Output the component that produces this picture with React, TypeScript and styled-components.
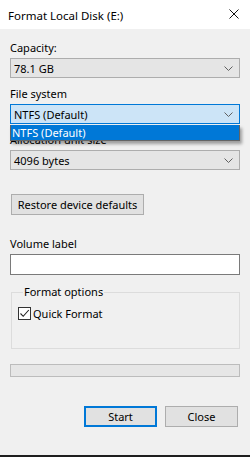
import styled, { createGlobalStyle } from 'styled-components';

const GlobalStyle = createGlobalStyle`
  html, body {
    margin: 0;
    padding: 0;
    background: #f0f0f0;
  }
  body {
    font-family: "Noto Sans", "Liberation Sans", Arial, sans-serif;
    font-size: 11px;
    color: #000;
  }
`;

export default function App() {
    return (
        <Window>
            <GlobalStyle/>
            <TitleBar>
                <Title>Format Local Disk (E:)</Title>
                <CloseIcon width="10" height="10" viewBox="0 0 10 10">
                    <path d="M0.5 0.5 L9.5 9.5 M9.5 0.5 L0.5 9.5" stroke="#111" strokeWidth="1"/>
                </CloseIcon>
            </TitleBar>

            <Content>
                <Field>
                    <Label>Capacity:</Label>
                    <Combo>
                        <span>78.1 GB</span>
                        <Chevron/>
                    </Combo>
                </Field>

                <Field>
                    <Label>File system</Label>
                    <ComboWrap>
                        <Combo open>
                            <span>NTFS (Default)</span>
                            <Chevron/>
                        </Combo>
                        <DropList>
                            <DropItem>NTFS (Default)</DropItem>
                        </DropList>
                    </ComboWrap>
                </Field>

                <Field>
                    <Label>Allocation unit size</Label>
                    <Combo>
                        <span>4096 bytes</span>
                        <Chevron/>
                    </Combo>
                </Field>

                <RestoreButton>Restore device defaults</RestoreButton>

                <Field spaced>
                    <Label>Volume label</Label>
                    <TextBox/>
                </Field>

                <GroupBox>
                    <Legend>Format options</Legend>
                    <CheckRow>
                        <CheckBox>
                            <svg width="11" height="11" viewBox="0 0 11 11">
                                <path d="M1.5 5.5 L4.2 8.3 L9.8 2" stroke="#222" strokeWidth="1.1" fill="none"/>
                            </svg>
                        </CheckBox>
                        <span>Quick Format</span>
                    </CheckRow>
                </GroupBox>

                <Progress/>

                <ButtonRow>
                    <DialogButton primary>Start</DialogButton>
                    <DialogButton>Close</DialogButton>
                </ButtonRow>
            </Content>
            <BottomStrip/>
        </Window>
    );
}

function Chevron() {
    return (
        <ChevronSvg width="9" height="5" viewBox="0 0 9 5">
            <path d="M0.5 0.5 L4.5 4.5 L8.5 0.5" stroke="#606060" strokeWidth="1" fill="none"/>
        </ChevronSvg>
    );
}

const Window = styled.div`
  width: 250px;
  height: 457px;
  display: flex;
  flex-direction: column;
  background: #f0f0f0;
  overflow: hidden;
`;

const TitleBar = styled.div`
  height: 29px;
  flex-shrink: 0;
  background: #fff;
  display: flex;
  align-items: center;
  justify-content: space-between;
  padding: 0 11px 0 8px;
`;

const Title = styled.span`
  font-size: 11.5px;
  color: #000;
  margin-top: 1px;
`;

const CloseIcon = styled.svg`
  margin-bottom: 1px;
`;

const Content = styled.div`
  flex: 1;
  display: flex;
  flex-direction: column;
  padding: 0 10px;
`;

const Field = styled.div<{ spaced?: boolean }>`
  display: flex;
  flex-direction: column;
  margin-top: ${(p) => (p.spaced ? '21px' : '8px')};

  &:first-child {
    margin-top: 11px;
  }
`;

const Label = styled.div`
  height: 15px;
  line-height: 15px;
  margin-bottom: 3px;
`;

const ComboWrap = styled.div`
  position: relative;
`;

const Combo = styled.div<{ open?: boolean }>`
  height: 20px;
  box-sizing: border-box;
  display: flex;
  align-items: center;
  justify-content: space-between;
  padding: 0 6px 0 3px;
  background: ${(p) => (p.open ? '#cce4f7' : '#e5e5e5')};
  border: 1px solid ${(p) => (p.open ? '#0078d7' : '#adadad')};
`;

const ChevronSvg = styled.svg`
  display: block;
`;

const DropList = styled.div`
  position: absolute;
  left: 0;
  right: 0;
  top: 21px;
  background: #fff;
  border: 1px solid #646464;
  border-top: none;
  box-shadow: 2px 3px 3px rgba(0, 0, 0, 0.35);
  z-index: 2;
`;

const DropItem = styled.div`
  height: 15px;
  line-height: 15px;
  padding-left: 1px;
  background: #0078d7;
  color: #fff;
`;

const RestoreButton = styled.button`
  align-self: flex-start;
  margin: 24px 0 0 1px;
  width: 133px;
  height: 21px;
  padding: 0;
  font: inherit;
  color: #000;
  background: #e1e1e1;
  border: 1px solid #adadad;
  border-radius: 0;
`;

const TextBox = styled.div`
  height: 21px;
  box-sizing: border-box;
  background: #fff;
  border: 1px solid #7a7a7a;
`;

const GroupBox = styled.fieldset`
  margin: 10px 0 0 1px;
  padding: 4px 6px 0;
  height: 64px;
  box-sizing: border-box;
  border: 1px solid #dcdcdc;
  min-width: 0;
`;

const Legend = styled.legend`
  padding: 0 1px;
  margin-left: 5px;
  line-height: 14px;
`;

const CheckRow = styled.div`
  display: flex;
  align-items: center;
  gap: 2px;
  margin-top: 3px;
`;

const CheckBox = styled.div`
  width: 13px;
  height: 13px;
  box-sizing: border-box;
  border: 1px solid #333;
  background: #fff;
  display: flex;
  align-items: center;
  justify-content: center;
`;

const Progress = styled.div`
  margin-top: 15px;
  height: 13px;
  box-sizing: border-box;
  background: #e6e6e6;
  border: 1px solid #bcbcbc;
`;

const ButtonRow = styled.div`
  display: flex;
  justify-content: flex-end;
  gap: 8px;
  margin-top: 29px;
  padding-right: 2px;
`;

const DialogButton = styled.button<{ primary?: boolean }>`
  width: 73px;
  height: 21px;
  padding: 0;
  font: inherit;
  color: #000;
  background: #e1e1e1;
  border-radius: 0;
  border: ${(p) => (p.primary ? '2px solid #0078d7' : '1px solid #adadad')};
`;

const BottomStrip = styled.div`
  height: 2px;
  flex-shrink: 0;
  background: #1e1e1e;
`;
